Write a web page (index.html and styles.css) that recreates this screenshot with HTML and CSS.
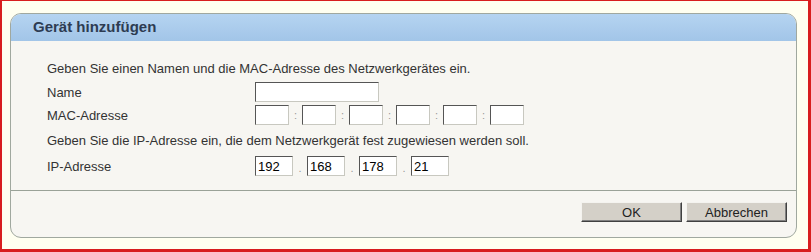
FILE: index.html
```html
<!DOCTYPE html>
<html lang="de">
<head>
    <meta charset="UTF-8">
    <title>Gerät hinzufügen</title>
    <link rel="stylesheet" href="styles.css">
</head>
<body>

<div class="frame">
    <div class="dialog">
        <div class="dialog-head">Gerät hinzufügen</div>

        <div class="dialog-body">
            <p class="hint">Geben Sie einen Namen und die MAC-Adresse des Netzwerkgerätes ein.</p>

            <div class="row">
                <label>Name</label>
                <input type="text" class="name">
            </div>

            <div class="row">
                <label>MAC-Adresse</label>
                <div class="fields">
                    <input type="text" class="mac" maxlength="2"><span class="sep">:</span>
                    <input type="text" class="mac" maxlength="2"><span class="sep">:</span>
                    <input type="text" class="mac" maxlength="2"><span class="sep">:</span>
                    <input type="text" class="mac" maxlength="2"><span class="sep">:</span>
                    <input type="text" class="mac" maxlength="2"><span class="sep">:</span>
                    <input type="text" class="mac" maxlength="2">
                </div>
            </div>

            <p class="hint hint-ip">Geben Sie die IP-Adresse ein, die dem Netzwerkgerät fest zugewiesen werden soll.</p>

            <div class="row row-ip">
                <label>IP-Adresse</label>
                <div class="fields">
                    <input type="text" class="ip" value="192"><span class="sep ip-sep">.</span>
                    <input type="text" class="ip" value="168"><span class="sep ip-sep">.</span>
                    <input type="text" class="ip" value="178"><span class="sep ip-sep">.</span>
                    <input type="text" class="ip" value="21">
                </div>
            </div>
        </div>

        <div class="dialog-foot">
            <button type="button">OK</button>
            <button type="button">Abbrechen</button>
        </div>
    </div>
</div>

</body>
</html>
```

FILE: styles.css
```css
html, body {
    margin: 0;
    padding: 0;
}

body {
    font-family: "Liberation Sans", Arial, sans-serif;
    font-size: 13px;
    color: #333;
    background-color: #fffff0;
}

.frame {
    box-sizing: border-box;
    width: 811px;
    height: 252px;
    padding: 12px 11px 12px 8px;
    border-top: 1px solid #d81e1e;
    border-left: 2px solid #d81e1e;
    border-right: 3px solid #d81e1e;
    border-bottom: 3px solid #d81e1e;
}

.dialog {
    box-sizing: border-box;
    height: 225px;
    border: 1px solid #a0a89f;
    border-radius: 11px;
    background-color: #f7f6f2;
    overflow: hidden;
}

.dialog-head {
    height: 27px;
    padding-left: 22px;
    line-height: 26px;
    font-size: 15px;
    font-weight: bold;
    color: #2d3c52;
    background: linear-gradient(#b5d4f1, #a2c5e8);
}

.dialog-body {
    padding: 20px 0 14px 36px;
}

.hint {
    margin: 0;
    line-height: 16px;
}

.hint-ip {
    margin-top: 8px;
}

.row {
    display: flex;
    align-items: center;
    height: 20px;
    margin-top: 3px;
}

.hint + .row {
    margin-top: 5px;
}

.hint-ip + .row {
    margin-top: 7px;
}

.row label {
    width: 208px;
}

.fields {
    display: flex;
    align-items: center;
}

input[type="text"] {
    box-sizing: border-box;
    height: 20px;
    margin: 0;
    padding: 1px 2px 0;
    font-family: "Liberation Sans", Arial, sans-serif;
    font-size: 13px;
    color: #000;
    background-color: #fff;
    border: 1px solid;
    border-color: #555 #c8c8c0 #c8c8c0 #555;
    border-radius: 0;
}

.name {
    width: 124px;
}

.mac {
    width: 34px;
}

.ip {
    width: 38px;
}

.sep {
    width: 13px;
    text-align: center;
    color: #999;
    font-size: 11px;
}

.ip-sep {
    width: 14px;
    padding-top: 4px;
}

.dialog-foot {
    display: flex;
    justify-content: flex-end;
    gap: 4px;
    padding: 11px 9px 0 0;
    border-top: 1px solid #9aa298;
}

button {
    box-sizing: border-box;
    width: 101px;
    height: 20px;
    padding: 0;
    font-family: "Liberation Sans", Arial, sans-serif;
    font-size: 13px;
    color: #222;
    background-color: #d4d0c8;
    border: 1px solid;
    border-color: #f4f3ef #404040 #404040 #f4f3ef;
    box-shadow: inset -1px -1px #808080;
    cursor: pointer;
}
```
